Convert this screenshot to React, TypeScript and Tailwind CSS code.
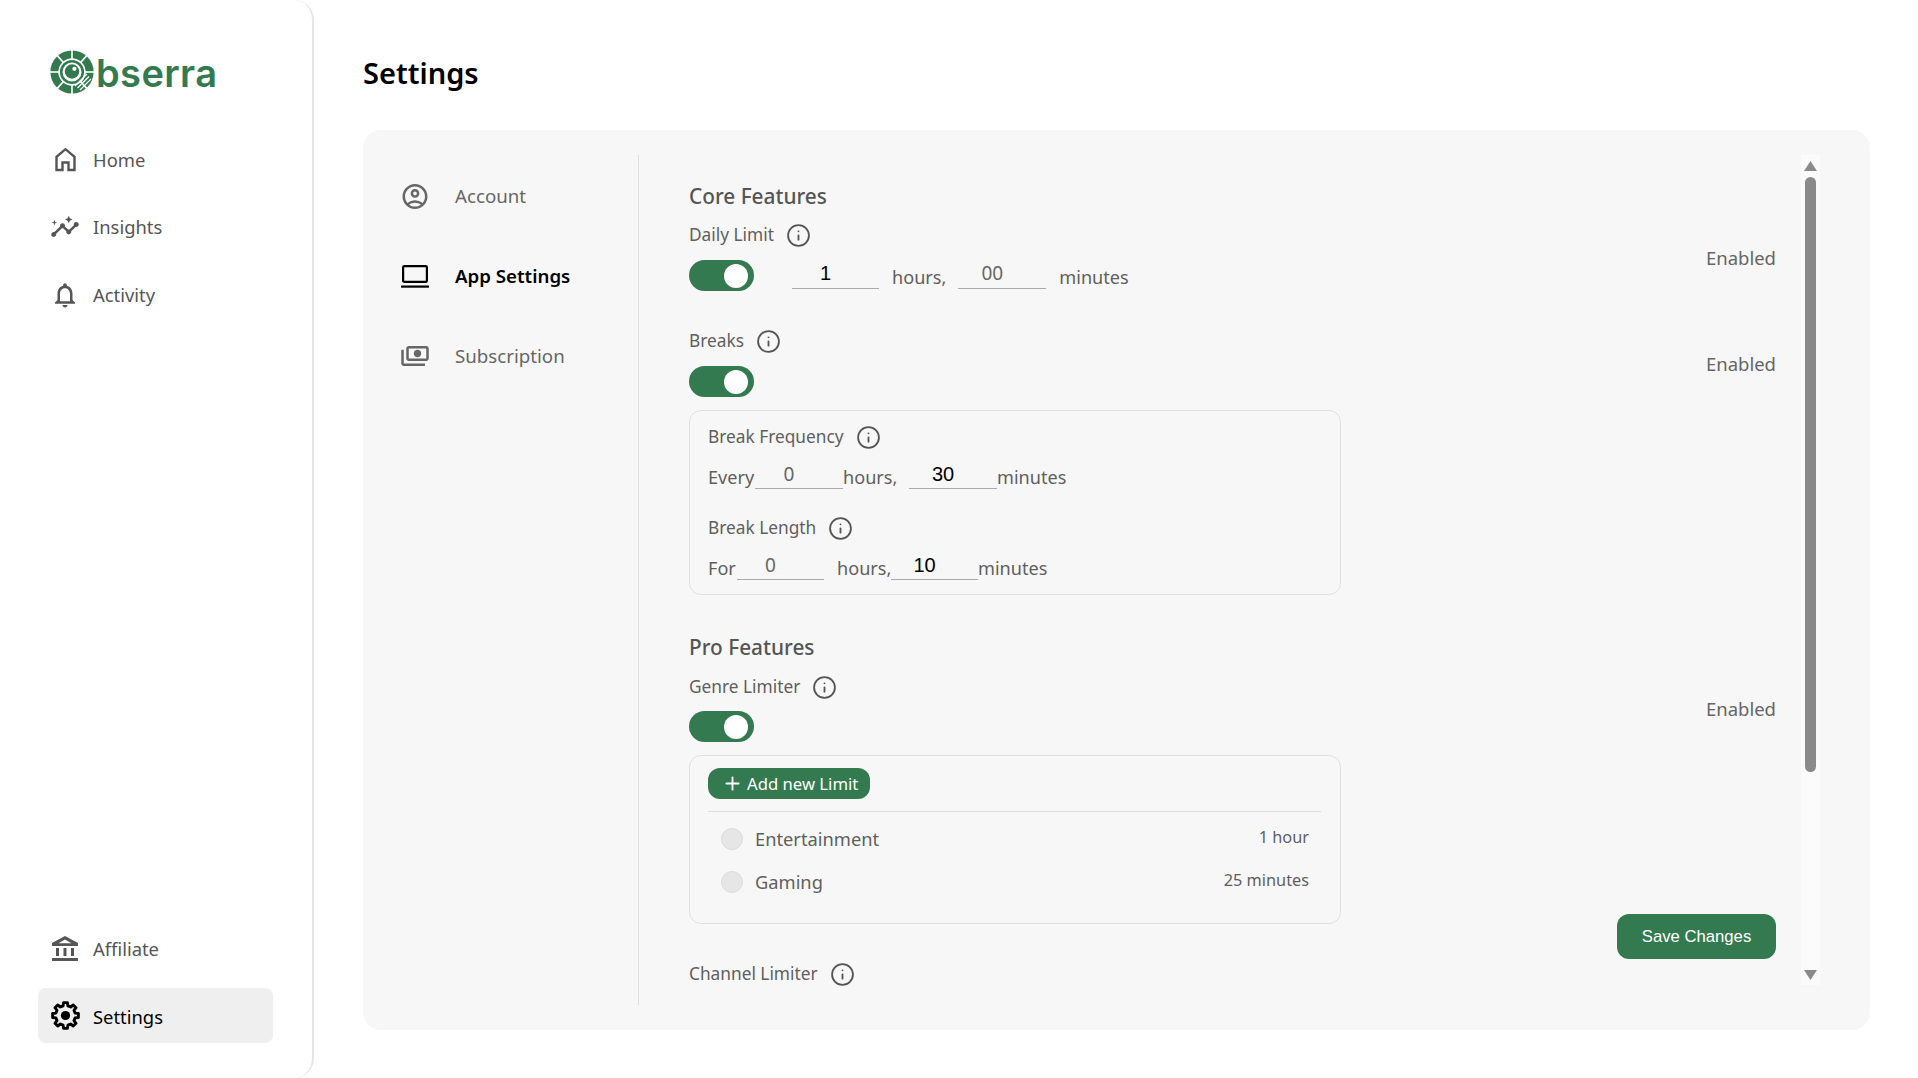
import React from "react";
import { Info, Plus } from "lucide-react";
import {
  MdOutlineInsights,
  MdOutlineNotifications,
  MdOutlineAccountCircle,
  MdOutlinePayments,
} from "react-icons/md";

const gearPoints = (() => {
  const pts: string[] = [];
  const n = 8;
  for (let i = 0; i < n; i++) {
    const a = (i / n) * Math.PI * 2 - Math.PI / 2;
    const d = Math.PI / n;
    const steps: [number, number][] = [
      [8.2, -d * 0.62],
      [10.8, -d * 0.38],
      [10.8, d * 0.38],
      [8.2, d * 0.62],
    ];
    steps.forEach(([r, o]) => {
      pts.push(`${(12 + r * Math.cos(a + o)).toFixed(2)},${(12 + r * Math.sin(a + o)).toFixed(2)}`);
    });
  }
  return pts.join(" ");
})();

function HomeIcon() {
  return (
    <svg width="23" height="25" viewBox="0 0 23 25" fill="none" stroke="#555555" strokeWidth="2.4" strokeLinejoin="miter">
      <path d="M2.5 23V9.8L11.5 2.2l9 7.6V23h-6v-7.5h-6V23z" />
    </svg>
  );
}

function GearIcon() {
  return (
    <svg width="29" height="29" viewBox="0 0 24 24" fill="none">
      <polygon points={gearPoints} stroke="#000" strokeWidth="2.4" strokeLinejoin="round" />
      <circle cx="12" cy="12" r="3.8" fill="#000" />
    </svg>
  );
}

function BankIcon() {
  return (
    <svg width="26" height="25" viewBox="0 0 26 25" fill="#555555">
      <path d="M13 0L26 7V10H0V7z" />
      <path d="M13 3.6L19.5 7.2H6.5z" fill="#ffffff" />
      <rect x="4" y="12" width="3" height="8" />
      <rect x="11.5" y="12" width="3" height="8" />
      <rect x="19" y="12" width="3" height="8" />
      <rect x="0" y="22" width="26" height="3" />
    </svg>
  );
}

function LaptopIcon() {
  return (
    <svg width="28" height="23" viewBox="0 0 28 23" fill="none" stroke="#000000" strokeWidth="2.2">
      <rect x="2.1" y="1.1" width="23.8" height="15.8" rx="1.2" />
      <path d="M0 21.6H28" />
    </svg>
  );
}

function LogoMark() {
  const gaps = [0, 42, 90, 138, 180, 222, 270, 318];
  return (
    <svg width="44" height="44" viewBox="0 0 44 44" className="shrink-0">
      <circle cx="22" cy="22" r="17.6" fill="none" stroke="#347a50" strokeWidth="8" />
      {gaps.map((g) => (
        <line key={g} x1="22" y1="22" x2="22" y2="-1" stroke="#fff" strokeWidth="1.6" transform={`rotate(${g} 22 22)`} />
      ))}
      <circle cx="22" cy="22" r="13.4" fill="#fff" />
      <circle cx="22" cy="22" r="10.8" fill="none" stroke="#347a50" strokeWidth="2.6" />
      <circle cx="22" cy="21.5" r="7.2" fill="#347a50" />
      <circle cx="24.4" cy="18.8" r="2.1" fill="#fff" />
      <g stroke="#fff" strokeWidth="1.3">
        <line x1="25" y1="36" x2="37" y2="24" />
        <line x1="27.5" y1="38" x2="39" y2="26.5" />
        <line x1="30" y1="40" x2="41" y2="29" />
      </g>
    </svg>
  );
}

function NavItem({ icon, label, active }: { icon: React.ReactNode; label: string; active?: boolean }) {
  return (
    <div className={`ml-[38px] flex h-[55px] w-[235px] items-center rounded-lg pl-[12px] ${active ? "bg-[#efefef] text-black" : "text-[#555555]"}`}>
      <span className="flex w-[30px] items-center justify-center">{icon}</span>
      <span className={`ml-[13px] text-[18.4px] leading-[24px] ${active ? "pt-[2px]" : ""}`}>{label}</span>
    </div>
  );
}

function SubNavItem({ icon, label, active, className }: { icon: React.ReactNode; label: string; active?: boolean; className?: string }) {
  return (
    <div className={`flex h-[40px] items-center pl-[37px] ${className ?? ""}`}>
      <span className={`flex w-[30px] items-center justify-center ${active ? "text-black" : "text-[#666666]"}`}>{icon}</span>
      <span className={`ml-[25px] text-[18.7px] ${active ? "font-semibold text-black" : "text-[#666666]"}`}>{label}</span>
    </div>
  );
}

function Toggle() {
  return (
    <div className="flex h-[31px] w-[65px] items-center justify-end rounded-full bg-[#347a50] pr-[6px]">
      <div className="h-[24px] w-[24px] rounded-full bg-white" />
    </div>
  );
}

function Label({ text, className }: { text: string; className?: string }) {
  return (
    <div className={`flex h-[24px] items-center ${className ?? ""}`}>
      <span className="text-[17.3px] text-[#5f5f5f]">{text}</span>
      <Info size={25} strokeWidth={1.75} className="ml-[12px] text-[#555555]" />
    </div>
  );
}

function NumField({ value, dark, width = "w-[87px]" }: { value: string; dark?: boolean; width?: string }) {
  return (
    <input
      readOnly
      value={value}
      className={`h-[27px] ${width} border-b border-[#aaaaaa] bg-transparent pb-[2px] pr-[20px] text-center outline-none ${dark ? "font-['Liberation_Sans'] text-[20px] text-black" : "text-[19px] text-[#666666]"}`}
    />
  );
}

function Unit({ text, className }: { text: string; className?: string }) {
  return <span className={`pt-[3px] text-[18.1px] leading-[24px] text-[#5f5f5f] ${className ?? ""}`}>{text}</span>;
}

function LimitRow({ name, time }: { name: string; time: string }) {
  return (
    <div className="flex h-[43px] items-center pl-[13px] pr-[12px]">
      <div className="h-[22px] w-[22px] rounded-full border border-[#dcdcdc] bg-[#e6e6e6]" />
      <span className="ml-[12px] flex-1 text-[18.3px] text-[#5f5f5f]">{name}</span>
      <span className="mb-[2px] text-[16.3px] text-[#5f5f5f]">{time}</span>
    </div>
  );
}

function FeatureHeader({ title, top, toggleTop, enabledShift }: { title: string; top: string; toggleTop: string; enabledShift: string }) {
  return (
    <div className={`flex items-center justify-between pr-[25px] ${top}`}>
      <div>
        <Label text={title} />
        <div className={toggleTop}>
          <Toggle />
        </div>
      </div>
      <span className={`text-[18.5px] text-[#666666] ${enabledShift}`}>Enabled</span>
    </div>
  );
}

export default function App() {
  return (
    <div className="flex h-[1078px] w-[1918px] overflow-hidden bg-white font-['Noto_Sans',sans-serif]">
      <aside className="flex h-full w-[314px] shrink-0 flex-col rounded-r-[20px] border-r-2 border-[#e6e6e6] pb-[35px]">
        <div className="flex items-center pl-[50px] pt-[48px]">
          <LogoMark />
          <span className="ml-[2px] mt-[3px] font-['Inter'] text-[38px] font-semibold leading-[44px] tracking-[0.4px] text-[#347a50]">bserra</span>
        </div>
        <div className="mt-[37px] flex flex-col gap-[12.5px]">
          <NavItem icon={<HomeIcon />} label="Home" />
          <NavItem icon={<MdOutlineInsights size={30} />} label="Insights" />
          <NavItem icon={<MdOutlineNotifications size={30} />} label="Activity" />
        </div>
        <div className="mt-auto flex flex-col gap-[12px]">
          <NavItem icon={<BankIcon />} label="Affiliate" />
          <NavItem icon={<GearIcon />} label="Settings" active />
        </div>
      </aside>

      <main className="min-w-0 flex-1 pl-[49px] pr-[48px] pt-[53px]">
        <h1 className="h-[40px] text-[29px] font-semibold leading-[40px] text-black">Settings</h1>
        <div className="mt-[37px] flex h-[900px] rounded-[18px] bg-[#f7f7f7] py-[25px]">
          <div className="w-[276px] shrink-0 border-r border-[#dedede] pt-[21px]">
            <SubNavItem icon={<MdOutlineAccountCircle size={31} />} label="Account" />
            <SubNavItem icon={<LaptopIcon />} label="App Settings" active className="mt-[40px]" />
            <SubNavItem icon={<MdOutlinePayments size={30} className="-scale-x-100" />} label="Subscription" className="mt-[40px]" />
          </div>

          <div className="relative min-w-0 flex-1 pl-[50px]">
            <h2 className="mt-[26px] h-[30px] text-[20.8px] font-medium leading-[30px] text-[#555555]">Core Features</h2>

            <FeatureHeader title="Daily Limit" top="mt-[12px]" toggleTop="mt-[13px]" enabledShift="mt-[2px]" />
            <div className="-mt-[31px] flex items-start pl-[103px]">
              <NumField value="1" dark width="w-[87px] h-[29px]" />
              <Unit text="hours," className="ml-[13px] mt-[2px]" />
              <div className="ml-[12px]">
                <NumField value="00" width="w-[88px] h-[29px]" />
              </div>
              <Unit text="minutes" className="ml-[13px] mt-[2px]" />
            </div>

            <FeatureHeader title="Breaks" top="mt-[40px]" toggleTop="mt-[13px]" enabledShift="mt-[1px]" />

            <div className="mt-[13px] h-[185px] w-[652px] rounded-[12px] border border-[#e0e0e0] pl-[18px] pt-[14px]">
              <Label text="Break Frequency" />
              <div className="mt-[13px] flex h-[27px] items-start">
                <Unit text="Every" className="w-[47px]" />
                <NumField value="0" width="w-[88px]" />
                <Unit text="hours," className="w-[53px]" />
                <div className="ml-[13px]">
                  <NumField value="30" dark width="w-[88px]" />
                </div>
                <Unit text="minutes" />
              </div>
              <Label text="Break Length" className="mt-[27px]" />
              <div className="mt-[13px] flex h-[27px] items-start">
                <Unit text="For" className="w-[29px]" />
                <NumField value="0" width="w-[87px]" />
                <Unit text="hours," className="ml-[13px] w-[54px]" />
                <NumField value="10" dark width="w-[87px]" />
                <Unit text="minutes" />
              </div>
            </div>

            <h2 className="mt-[37px] h-[30px] text-[20.8px] font-medium leading-[30px] text-[#555555]">Pro Features</h2>

            <FeatureHeader title="Genre Limiter" top="mt-[13px]" toggleTop="mt-[12px]" enabledShift="mt-0" />

            <div className="mt-[13px] h-[169px] w-[652px] rounded-[12px] border border-[#e0e0e0] pl-[18px] pr-[19px] pt-[12px]">
              <button className="flex h-[31px] w-[162px] items-center rounded-[12px] bg-[#347a50] pl-[14px] text-white">
                <Plus size={21} strokeWidth={2.1} />
                <span className="ml-[4px] text-[16.7px] leading-[24px]">Add new Limit</span>
              </button>
              <div className="mt-[12px] h-px bg-[#dddddd]" />
              <div className="pt-[5px]">
                <LimitRow name="Entertainment" time="1 hour" />
                <LimitRow name="Gaming" time="25 minutes" />
              </div>
            </div>

            <Label text="Channel Limiter" className="mt-[38px]" />

            <button className="absolute bottom-[46px] right-[25px] h-[45px] w-[159px] rounded-[12px] bg-[#347a50] font-['Liberation_Sans'] text-[16.7px] text-white">
              Save Changes
            </button>
          </div>

          <div className="mr-[50px] flex h-[830px] w-[19px] shrink-0 flex-col items-center bg-[#fbfbfb]">
            <svg width="13" height="10" viewBox="0 0 13 10" className="mt-[6px]">
              <path d="M6.5 0L13 10H0z" fill="#8a8a8a" />
            </svg>
            <div className="mt-[6px] h-[595px] w-[11px] rounded-full bg-[#8a8a8a]" />
            <svg width="13" height="10" viewBox="0 0 13 10" className="mb-[5px] mt-auto">
              <path d="M0 0H13L6.5 10z" fill="#8a8a8a" />
            </svg>
          </div>
        </div>
      </main>
    </div>
  );
}
